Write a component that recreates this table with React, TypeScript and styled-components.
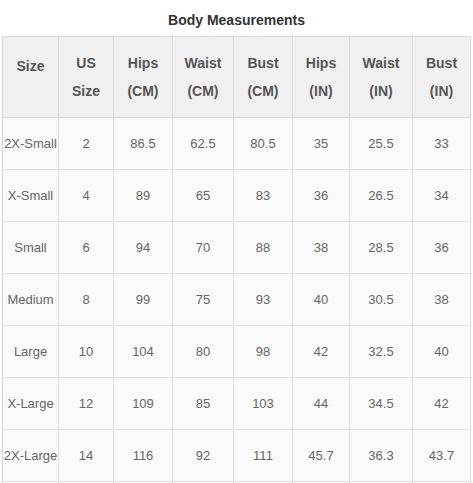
import React from 'react'
import styled, { createGlobalStyle } from 'styled-components'

const GlobalStyle = createGlobalStyle`
  body {
    margin: 0;
    background: #ffffff;
    font-family: "Liberation Sans", Arial, sans-serif;
  }
`

const Page = styled.div`
  width: 473px;
  padding: 0 2px;
  box-sizing: border-box;
`

const Title = styled.div`
  height: 36px;
  line-height: 40px;
  text-align: center;
  font-size: 14px;
  font-weight: bold;
  color: #333333;
`

const Table = styled.table`
  width: 468px;
  table-layout: fixed;
  border-collapse: collapse;
  border-left: 1px solid #d4d4d4;
`

const HeadCell = styled.th`
  height: 80px;
  padding: 0;
  background: #f0f0f0;
  border: 1px solid #dadada;
  border-left: none;
  font-size: 14px;
  font-weight: bold;
  color: #555555;
  line-height: 28px;
  text-align: center;
  vertical-align: middle;
`

const HeadText = styled.div<{ $single?: boolean }>`
  padding-bottom: ${(p) => (p.$single ? '22px' : '0')};
`

const Cell = styled.td`
  height: 51px;
  padding: 0;
  background: #fafafa;
  border: 1px solid #e0e0e0;
  border-left: none;
  font-size: 13px;
  color: #666666;
  text-align: center;
  vertical-align: middle;
  white-space: nowrap;
`

const WIDTHS = [56, 55, 59, 61, 59, 57, 63, 58]

const HEADERS: string[][] = [
  ['Size'],
  ['US', 'Size'],
  ['Hips', '(CM)'],
  ['Waist', '(CM)'],
  ['Bust', '(CM)'],
  ['Hips', '(IN)'],
  ['Waist', '(IN)'],
  ['Bust', '(IN)'],
]

const ROWS: string[][] = [
  ['2X-Small', '2', '86.5', '62.5', '80.5', '35', '25.5', '33'],
  ['X-Small', '4', '89', '65', '83', '36', '26.5', '34'],
  ['Small', '6', '94', '70', '88', '38', '28.5', '36'],
  ['Medium', '8', '99', '75', '93', '40', '30.5', '38'],
  ['Large', '10', '104', '80', '98', '42', '32.5', '40'],
  ['X-Large', '12', '109', '85', '103', '44', '34.5', '42'],
  ['2X-Large', '14', '116', '92', '111', '45.7', '36.3', '43.7'],
  ['', '', '', '', '', '', '', ''],
]

export default function App() {
  return (
    <Page>
      <GlobalStyle />
      <Title>Body Measurements</Title>
      <Table>
        <colgroup>
          {WIDTHS.map((w, i) => (
            <col key={i} style={{ width: w }} />
          ))}
        </colgroup>
        <thead>
          <tr>
            {HEADERS.map((lines, i) => (
              <HeadCell key={i}>
                <HeadText $single={lines.length === 1}>
                  {lines.map((line, j) => (
                    <div key={j}>{line}</div>
                  ))}
                </HeadText>
              </HeadCell>
            ))}
          </tr>
        </thead>
        <tbody>
          {ROWS.map((row, r) => (
            <tr key={r}>
              {row.map((value, c) => (
                <Cell key={c}>{value}</Cell>
              ))}
            </tr>
          ))}
        </tbody>
      </Table>
    </Page>
  )
}
